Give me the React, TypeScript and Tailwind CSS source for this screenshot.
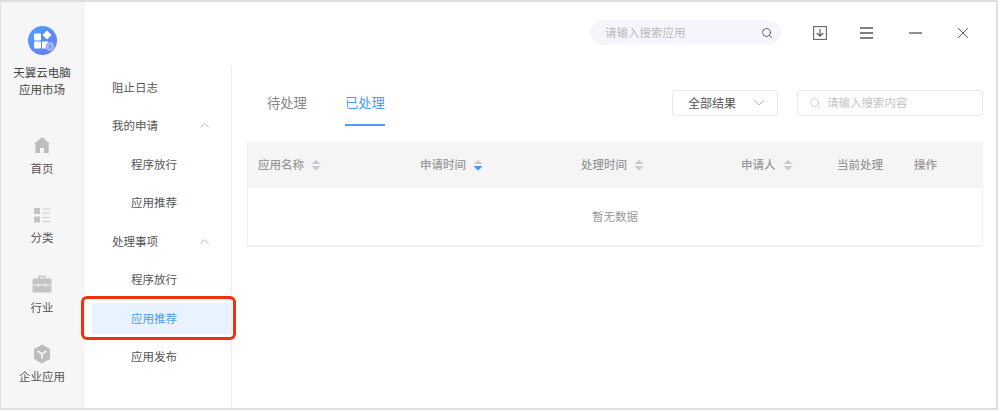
import { ChevronDown, ChevronUp, Search, X } from "lucide-react"

function HomeIcon() {
  return (
    <svg width="18" height="18" viewBox="0 0 18 18">
      <path d="M9 1 L17 8 L15.6 8 L15.6 17 L11 17 L11 12 L7 12 L7 17 L2.4 17 L2.4 8 L1 8 Z" fill="#bdbdbd" />
    </svg>
  )
}

function CategoryIcon() {
  return (
    <svg width="18" height="18" viewBox="0 0 18 18">
      <rect x="1" y="2" width="6" height="6" fill="#c4c4c4" />
      <rect x="1" y="10.5" width="6" height="6" fill="#c4c4c4" />
      <path d="M9.5 3h7.5M9.5 7h7.5M9.5 11.5h7.5M9.5 15.5h7.5" stroke="#cccccc" strokeWidth="1.2" />
    </svg>
  )
}

function CaseIcon() {
  return (
    <svg width="20" height="18" viewBox="0 0 20 18">
      <path d="M7 4V1.5h6V4" fill="none" stroke="#c4c4c4" strokeWidth="1.4" />
      <rect x="0.5" y="3.5" width="19" height="14" rx="1.5" fill="#c4c4c4" />
      <path d="M1 10h18" stroke="#f6f6f6" strokeWidth="1" />
      <path d="M6 8.5v3M13.5 8.5v3" stroke="#f6f6f6" strokeWidth="1.4" />
    </svg>
  )
}

function CubeIcon() {
  return (
    <svg width="18" height="20" viewBox="0 0 18 20">
      <path d="M9 0.5 L17 5 L17 15 L9 19.5 L1 15 L1 5 Z" fill="#bdbdbd" />
      <path d="M4.5 7 L9 10 L13.5 7 M9 10 L9 15" fill="none" stroke="#f6f6f6" strokeWidth="1.6" />
    </svg>
  )
}

function Logo() {
  return (
    <svg width="29" height="29" viewBox="0 0 29 29" className="shrink-0">
      <defs>
        <linearGradient id="logoFill" x1="0" y1="0" x2="1" y2="1">
          <stop offset="0" stopColor="#4aa4fb" />
          <stop offset="1" stopColor="#6a78ee" />
        </linearGradient>
      </defs>
      <circle cx="14.5" cy="14.5" r="14.5" fill="url(#logoFill)" />
      <rect x="6" y="7.5" width="7" height="7" rx="1" fill="#fff" />
      <rect x="6" y="15.5" width="7" height="7" rx="1" fill="#fff" />
      <rect x="14" y="15.5" width="6" height="7" fill="#fff" />
      <path d="M19 4.5 L23.5 9 L19 13.5 L14.5 9 Z" fill="#fff" />
      <circle cx="22" cy="20.5" r="4.5" fill="#9db5f5" />
      <path d="M22 18.5v4" stroke="#5a7cea" strokeWidth="1" />
    </svg>
  )
}

function SortIcon({ active }: { active?: boolean }) {
  return (
    <svg width="10" height="12" viewBox="0 0 10 12" className="ml-[7px]">
      <path d="M5 1 L9.5 5 L0.5 5 Z" fill="#c8c9cc" />
      <path d="M5 11.5 L9.5 7 L0.5 7 Z" fill={active ? "#3f96f5" : "#c8c9cc"} />
    </svg>
  )
}

function NavItem({ icon, label }: { icon: React.ReactNode; label: string }) {
  return (
    <div className="flex h-[69.5px] shrink-0 flex-col items-center last:h-auto">
      <div className="flex h-[22px] shrink-0 items-center justify-center">{icon}</div>
      <div className="mt-[3.5px] text-[11.5px] leading-[17px] text-[#555]">{label}</div>
    </div>
  )
}

function MenuRow({ label, sub, open, active }: { label: string; sub?: boolean; open?: boolean; active?: boolean }) {
  return (
    <div
      className={
        "flex h-[38.5px] items-center text-[11.5px] " +
        (sub ? "pl-[46px] " : "pl-[27px] ") +
        (active ? "text-[#4c9dfa]" : "text-[#555]")
      }
    >
      <div className={active ? "-ml-[39px] flex h-[31px] w-[139px] items-center bg-[#e8f3ff] pl-[39px]" : ""}>{label}</div>
      {open && <ChevronUp size={15} strokeWidth={1} className="ml-[39px] text-[#999]" />}
    </div>
  )
}

const columns = [
  { title: "应用名称", width: "w-[162px]", sort: true },
  { title: "申请时间", width: "w-[161px]", sort: true, active: true },
  { title: "处理时间", width: "w-[160px]", sort: true },
  { title: "申请人", width: "w-[96px]", sort: true },
  { title: "当前处理", width: "w-[77px]" },
  { title: "操作", width: "w-[58px]" },
]

export default function App() {
  return (
    <div className="relative h-[411px] w-[1000px] overflow-hidden bg-white font-['Noto_Sans_CJK_SC','Noto_Sans',sans-serif]">
      <div className="flex h-[410px] w-[998px] border-t-2 border-r-2 border-b-2 border-l border-[#dedede]">
        <aside className="flex w-[84px] shrink-0 flex-col items-center bg-[#f6f6f6] pt-[24px] pr-[2px]">
          <Logo />
          <div className="mt-[9px] text-center text-[11.5px] leading-[17px] text-[#444]">
            天翼云电脑
            <br />
            应用市场
          </div>
          <div className="mt-[36px] flex w-full flex-col">
            <NavItem icon={<HomeIcon />} label="首页" />
            <NavItem icon={<CategoryIcon />} label="分类" />
            <NavItem icon={<CaseIcon />} label="行业" />
            <NavItem icon={<CubeIcon />} label="企业应用" />
          </div>
        </aside>

        <div className="flex min-w-0 flex-1 flex-col">
          <header className="flex h-[63px] shrink-0 items-center pb-[2px]">
            <div className="ml-[505px] flex h-[25px] w-[191px] items-center justify-between rounded-full bg-[#f5f5fb] pr-[8px] pl-[15px] text-[11.5px] text-[#bbb]">
              <span>请输入搜索应用</span>
              <Search size={12} strokeWidth={1.6} className="text-[#444]" />
            </div>
            <svg width="14" height="14" viewBox="0 0 14 14" className="ml-[32px]">
              <rect x="0.6" y="0.6" width="12.8" height="12.8" fill="none" stroke="#666" strokeWidth="1.1" />
              <path d="M7 3v7M3.8 7 L7 10.2 L10.2 7" fill="none" stroke="#555" strokeWidth="1.1" />
            </svg>
            <svg width="13" height="12" viewBox="0 0 13 12" className="ml-[33px]">
              <path d="M0 1h13M0 6h13M0 11h13" stroke="#555" strokeWidth="1.3" />
            </svg>
            <svg width="13" height="2" viewBox="0 0 13 2" className="ml-[36px]">
              <path d="M0 1h13" stroke="#555" strokeWidth="1.3" />
            </svg>
            <X size={18} strokeWidth={1.2} className="ml-[32px] text-[#444]" />
          </header>

          <div className="flex min-h-0 flex-1">
            <nav className="w-[147px] shrink-0 border-r border-[#eeeeee] pt-[3px]">
              <MenuRow label="阻止日志" />
              <MenuRow label="我的申请" open />
              <MenuRow label="程序放行" sub />
              <MenuRow label="应用推荐" sub />
              <MenuRow label="处理事项" open />
              <MenuRow label="程序放行" sub />
              <MenuRow label="应用推荐" sub active />
              <MenuRow label="应用发布" sub />
            </nav>

            <main className="min-w-0 flex-1 pt-[25px] pl-[15px]">
              <div className="flex h-[37px] w-[736px] items-start">
                <div className="ml-[20px] flex h-[36px] items-start pt-[3px] text-[13.3px] leading-[19px] text-[#888]">待处理</div>
                <div className="ml-[38px] h-[36px] border-b-2 border-[#4c9dfa] pt-[3px] text-[13.3px] leading-[19px] text-[#4c9dfa]">
                  已处理
                </div>
                <div className="ml-auto flex h-[26px] w-[106px] items-center justify-between rounded-[3px] border border-[#e8e8ee] pr-[10px] pl-[15px] text-[12px] text-[#555]">
                  <span>全部结果</span>
                  <ChevronDown size={16} strokeWidth={1} className="text-[#999]" />
                </div>
                <div className="ml-[19px] flex h-[26px] w-[186px] items-center rounded-[3px] border border-[#e8e8ee] pl-[11px] text-[11.5px] text-[#c4c4c4]">
                  <Search size={12} strokeWidth={1.2} className="mr-[6px] text-[#bbb]" />
                  <span>请输入搜索内容</span>
                </div>
              </div>

              <div className="mt-[15px] w-[736px] border-x border-b-2 border-[#f0f0f2]">
                <div className="flex h-[46px] items-center bg-[#f5f5f5] pl-[10px] text-[11.5px] font-medium text-[#999]">
                  {columns.map((col) => (
                    <div key={col.title} className={"flex items-center " + col.width}>
                      {col.title}
                      {col.sort && <SortIcon active={col.active} />}
                    </div>
                  ))}
                </div>
                <div className="flex h-[57px] items-center justify-center text-[11.5px] text-[#999]">暂无数据</div>
              </div>
            </main>
          </div>
        </div>
      </div>

      {/* red annotation box drawn over the screenshot */}
      <div className="absolute top-[296px] left-[81px] h-[44px] w-[155px] rounded-[6px] border-[3px] border-[#f0300f]" />
    </div>
  )
}
